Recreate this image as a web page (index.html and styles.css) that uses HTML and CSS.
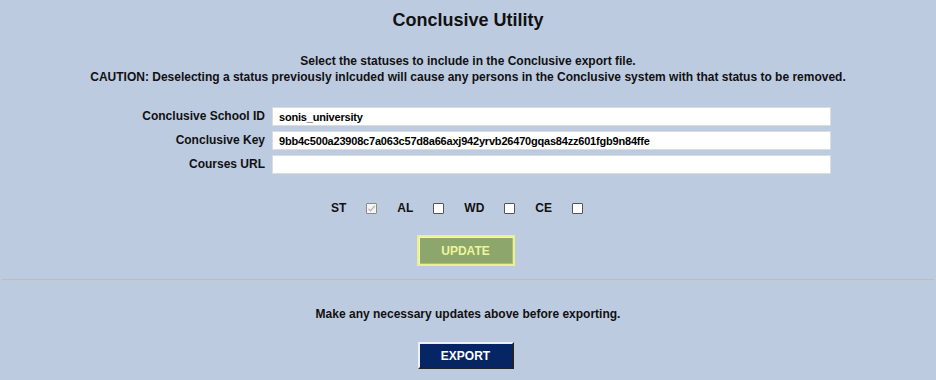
FILE: index.html
```html
<!DOCTYPE html>
<html lang="en">
<head>
    <meta charset="UTF-8">
    <meta name="viewport" content="width=device-width, initial-scale=1.0">
    <title>Conclusive Utility</title>
    <link rel="stylesheet" href="styles.css">
</head>
<body>

    <h1 class="page-title">Conclusive Utility</h1>

    <div class="intro">
        <p>Select the statuses to include in the Conclusive export file.</p>
        <p>CAUTION: Deselecting a status previously inlcuded will cause any persons in the Conclusive system with that status to be removed.</p>
    </div>

    <div class="settings">
        <label class="field-label" for="schoolId">Conclusive School ID</label>
        <input class="field-input" type="text" id="schoolId" value="sonis_university">

        <label class="field-label" for="conclusiveKey">Conclusive Key</label>
        <input class="field-input" type="text" id="conclusiveKey" value="9bb4c500a23908c7a063c57d8a66axj942yrvb26470gqas84zz601fgb9n84ffe">

        <label class="field-label" for="coursesUrl">Courses URL</label>
        <input class="field-input" type="text" id="coursesUrl" value="">
    </div>

    <div class="statuses">
        <span class="status-name">ST</span>
        <span class="status-box checked">
            <svg width="9" height="9" viewBox="0 0 9 9"><path d="M1.5 4.8 L3.5 6.8 L7.8 1.8" fill="none" stroke="#a9a9a9" stroke-width="1.1"/></svg>
        </span>
        <span class="status-name">AL</span>
        <span class="status-box"></span>
        <span class="status-name">WD</span>
        <span class="status-box"></span>
        <span class="status-name">CE</span>
        <span class="status-box"></span>
    </div>

    <div class="action-row">
        <button class="update-btn">UPDATE</button>
    </div>

    <hr class="divider">

    <p class="export-note">Make any necessary updates above before exporting.</p>

    <div class="action-row">
        <button class="export-btn">EXPORT</button>
    </div>

</body>
</html>
```

FILE: styles.css
```css
body {
    font-family: 'Liberation Sans', Arial, sans-serif;
    background-color: #bdcbe1; /* Pale steel blue page */
    color: #111;
    margin: 0;
    padding: 0;
}

.page-title {
    margin: 0;
    padding-top: 10px;
    font-size: 18px;
    line-height: 21px;
    text-align: center;
}

.intro {
    margin-top: 22px;
    text-align: center;
    font-size: 12px;
    font-weight: bold;
}

.intro p {
    margin: 0;
    line-height: 16px;
}

.settings {
    display: grid;
    grid-template-columns: 265px 559px;
    column-gap: 7px;
    row-gap: 5px;
    margin-top: 22px;
}

.field-label {
    text-align: right;
    font-size: 12px;
    font-weight: bold;
    line-height: 19px;
}

.field-input {
    height: 19px;
    box-sizing: border-box;
    border: 1px solid #dcdcdc;
    background-color: #fff;
    padding: 0 6px;
    font-family: 'Liberation Sans', Arial, sans-serif;
    font-size: 11px;
    font-weight: bold;
    letter-spacing: -0.2px;
    color: #000;
    outline: none;
}

.statuses {
    display: flex;
    justify-content: center;
    align-items: center;
    gap: 20px;
    margin-top: 27px;
    padding-right: 22px;
}

.status-name {
    font-size: 12px;
    font-weight: bold;
}

.status-box {
    width: 11px;
    height: 11px;
    box-sizing: border-box;
    border: 1px solid #555;
    border-radius: 1px;
    background-color: #fff;
    display: flex;
    align-items: center;
    justify-content: center;
}

.status-box.checked {
    border-color: #8a8a8a;
    background-color: #f4f4f4;
}

.action-row {
    display: flex;
    justify-content: center;
    padding-right: 5px;
}

.update-btn {
    margin-top: 20px;
    width: 98px;
    height: 31px;
    background-color: #8ca66b; /* Olive green */
    border: 2px solid #e9f190;
    box-shadow: inset 1px 1px 0 #f4f8b8, inset -1px -1px 0 #b3c06a;
    color: #eef59a;
    font-family: 'Liberation Sans', Arial, sans-serif;
    font-size: 12px;
    font-weight: bold;
    cursor: pointer;
}

.divider {
    margin: 13px 2px 0 2px;
    border: none;
    border-top: 1px solid #b9bec6;
    border-bottom: 1px solid #c4c9d0;
}

.export-note {
    margin: 26px 0 0 0;
    text-align: center;
    font-size: 12px;
    font-weight: bold;
}

.export-btn {
    margin-top: 21px;
    width: 96px;
    height: 27px;
    background-color: #062565; /* Navy */
    border: 2px outset #d8d8d8;
    border-color: #f0f0f0 #777 #777 #f0f0f0;
    color: #fff;
    font-family: 'Liberation Sans', Arial, sans-serif;
    font-size: 12px;
    font-weight: bold;
    cursor: pointer;
}
```
